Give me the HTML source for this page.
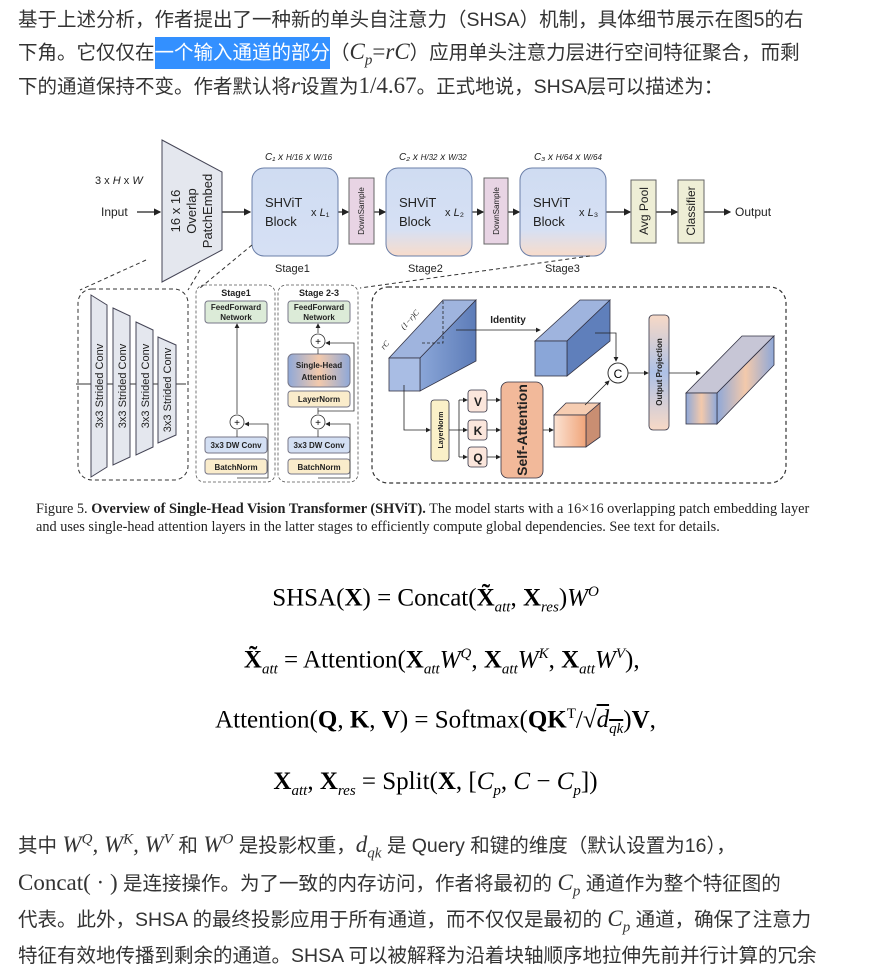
<!DOCTYPE html>
<html><head><meta charset="utf-8"><style>
body{margin:0;width:871px;height:959px;overflow:hidden;background:#fff;font-family:"Liberation Sans","Noto Sans CJK SC",sans-serif;color:#333;}
.p{position:absolute;left:18px;font-size:19.5px;white-space:nowrap;}
.m{font-family:"Liberation Serif",serif;font-style:italic;font-size:23px;}
.r{font-family:"Liberation Serif",serif;font-size:23px;}
.hl{background:#3390ff;color:#fff;}
.eq{position:absolute;left:0;width:871px;text-align:center;font-family:"Liberation Serif",serif;font-size:25px;color:#000;}
.eq b{font-weight:bold}
sub,sup{font-size:15px;}
</style></head><body>
<div class="p" style="top:3px">基于上述分析，作者提出了一种新的单头自注意力（SHSA）机制，具体细节展示在图5的右</div>
<div class="p" style="top:36px">下角。它仅仅在<span class="hl" style="padding:5px 0">一个输入通道的部分</span>（<span class="m">C<sub>p</sub></span><span class="r">=</span><span class="m">rC</span>）应用单头注意力层进行空间特征聚合，而剩</div>
<div class="p" style="top:70px">下的通道保持不变。作者默认将<span class="m">r</span>设置为<span class="r">1/4.67</span>。正式地说，SHSA层可以描述为：</div>

<svg style="position:absolute;left:0;top:0" width="871" height="540" font-family="Liberation Sans,sans-serif">
<defs>
<linearGradient id="bl" x1="0" y1="0" x2="0" y2="1"><stop offset="0" stop-color="#cfdcf2"/><stop offset="0.7" stop-color="#d6e0f4"/><stop offset="1" stop-color="#f8dccb"/></linearGradient>
<linearGradient id="b1" x1="0" y1="0" x2="0" y2="1"><stop offset="0" stop-color="#cfdcf2"/><stop offset="1" stop-color="#d6e0f4"/></linearGradient>
<linearGradient id="cb" x1="0" y1="0" x2="1" y2="0"><stop offset="0" stop-color="#8aa6d8"/><stop offset="1" stop-color="#5d7cb8"/></linearGradient>
<linearGradient id="co" x1="0" y1="0" x2="1" y2="0"><stop offset="0" stop-color="#fbe3d3"/><stop offset="1" stop-color="#f0a479"/></linearGradient>
<linearGradient id="mx" x1="0" y1="0" x2="1" y2="0"><stop offset="0" stop-color="#8fa8d8"/><stop offset="0.5" stop-color="#f3c9ab"/><stop offset="1" stop-color="#8fa8d8"/></linearGradient>
<linearGradient id="op" x1="0" y1="0" x2="0" y2="1"><stop offset="0" stop-color="#f7d9c6"/><stop offset="0.5" stop-color="#aec1e6"/><stop offset="1" stop-color="#f7d9c6"/></linearGradient>
<marker id="a" markerWidth="6" markerHeight="6" refX="5" refY="3" orient="auto"><path d="M0,0L6,3L0,6z" fill="#222"/></marker>
</defs>
<g font-size="11" fill="#222">
<text x="95" y="184" font-size="11">3 x <tspan font-style="italic">H</tspan> x <tspan font-style="italic">W</tspan></text>
<text x="101" y="216" font-size="12">Input</text>
<text x="735" y="216" font-size="12">Output</text>
</g>
<g stroke="#222" stroke-width="1.2" fill="none" marker-end="url(#a)">
<line x1="137" y1="212" x2="160" y2="212"/><line x1="222" y1="212" x2="250" y2="212"/>
<line x1="338" y1="212" x2="348" y2="212"/><line x1="374" y1="212" x2="385" y2="212"/>
<line x1="472" y1="212" x2="483" y2="212"/><line x1="508" y1="212" x2="519" y2="212"/>
<line x1="606" y1="212" x2="630" y2="212"/><line x1="656" y1="212" x2="677" y2="212"/><line x1="704" y1="212" x2="730" y2="212"/>
</g>
<polygon points="162,140 222,172 222,250 162,282" fill="#e4e7ee" stroke="#445" stroke-width="1"/>
<g font-size="13" fill="#222" text-anchor="middle">
<text transform="translate(180,211) rotate(-90)">16 x 16</text>
<text transform="translate(196,211) rotate(-90)">Overlap</text>
<text transform="translate(212,211) rotate(-90)">PatchEmbed</text>
</g>
<rect x="252" y="168" width="86" height="88" rx="12" fill="url(#b1)" stroke="#6b7fa8"/>
<rect x="386" y="168" width="86" height="88" rx="12" fill="url(#bl)" stroke="#6b7fa8"/>
<rect x="520" y="168" width="86" height="88" rx="12" fill="url(#bl)" stroke="#6b7fa8"/>
<g font-size="13" fill="#222">
<text x="265" y="207">SHViT</text><text x="265" y="226">Block</text><text x="311" y="216" font-size="11">x <tspan font-style="italic">L</tspan>₁</text>
<text x="399" y="207">SHViT</text><text x="399" y="226">Block</text><text x="445" y="216" font-size="11">x <tspan font-style="italic">L</tspan>₂</text>
<text x="533" y="207">SHViT</text><text x="533" y="226">Block</text><text x="579" y="216" font-size="11">x <tspan font-style="italic">L</tspan>₃</text>
<text x="275" y="272" font-size="11">Stage1</text><text x="408" y="272" font-size="11">Stage2</text><text x="545" y="272" font-size="11">Stage3</text>
<text x="265" y="160" font-size="10" font-style="italic">C₁ x <tspan font-size="8">H/16</tspan> x <tspan font-size="8">W/16</tspan></text>
<text x="399" y="160" font-size="10" font-style="italic">C₂ x <tspan font-size="8">H/32</tspan> x <tspan font-size="8">W/32</tspan></text>
<text x="534" y="160" font-size="10" font-style="italic">C₃ x <tspan font-size="8">H/64</tspan> x <tspan font-size="8">W/64</tspan></text>
</g>
<rect x="349" y="178" width="25" height="66" fill="#e8d4e4" stroke="#666"/>
<rect x="484" y="178" width="24" height="66" fill="#e8d4e4" stroke="#666"/>
<rect x="631" y="180" width="25" height="63" fill="#eeeed6" stroke="#666"/>
<rect x="678" y="180" width="26" height="63" fill="#eeeed6" stroke="#666"/>
<g font-size="8" fill="#222" text-anchor="middle">
<text transform="translate(364,211) rotate(-90)">DownSample</text>
<text transform="translate(499,211) rotate(-90)">DownSample</text>
<text transform="translate(648,211) rotate(-90)" font-size="12">Avg Pool</text>
<text transform="translate(695,211) rotate(-90)" font-size="12">Classifier</text>
</g>
<g stroke="#333" stroke-dasharray="4,3" fill="none" stroke-width="1">
<line x1="146" y1="260" x2="80" y2="290"/><line x1="200" y1="270" x2="188" y2="290"/>
<line x1="252" y1="245" x2="200" y2="288"/>
<line x1="590" y1="256" x2="360" y2="288"/>
<rect x="78" y="289" width="110" height="191" rx="14"/>
<rect x="372" y="287" width="414" height="196" rx="16" stroke-width="1.2"/>
</g>
<g stroke="#555" stroke-dasharray="3,2" fill="none" stroke-width="0.8">
<rect x="196" y="285" width="79" height="197" rx="8"/>
<rect x="278" y="285" width="80" height="197" rx="8"/>
</g>
<line x1="76" y1="384" x2="186" y2="384" stroke="#333"/>
<g fill="#e4e7ee" stroke="#445">
<polygon points="91,295 107,305 107,467 91,477"/><polygon points="113,308 130,316 130,457 113,465"/>
<polygon points="136,322 153,330 153,447 136,455"/><polygon points="158,337 176,345 176,435 158,443"/>
</g>
<g font-size="11" fill="#222" text-anchor="middle">
<text transform="translate(103,386) rotate(-90)">3x3 Strided Conv</text><text transform="translate(126,386) rotate(-90)">3x3 Strided Conv</text>
<text transform="translate(149,386) rotate(-90)">3x3 Strided Conv</text><text transform="translate(171,390) rotate(-90)">3x3 Strided Conv</text>
</g>
<g font-size="8" font-weight="bold" fill="#222" text-anchor="middle">
<text x="236" y="296" font-size="9">Stage1</text><text x="319" y="296" font-size="9">Stage 2-3</text>
<rect x="205" y="301" width="62" height="22" rx="3" fill="#dcebd8" stroke="#778"/>
<text x="236" y="310">FeedForward</text><text x="236" y="320">Network</text>
<rect x="205" y="437" width="62" height="16" rx="3" fill="#d3dff3" stroke="#778"/><text x="236" y="448">3x3 DW Conv</text>
<rect x="205" y="459" width="62" height="15" rx="3" fill="#faeccb" stroke="#778"/><text x="236" y="470">BatchNorm</text>
<rect x="288" y="301" width="62" height="22" rx="3" fill="#dcebd8" stroke="#778"/>
<text x="319" y="310">FeedForward</text><text x="319" y="320">Network</text>
<rect x="288" y="354" width="62" height="33" rx="5" fill="url(#mx)" stroke="#778"/><text x="319" y="368">Single-Head</text><text x="319" y="380">Attention</text>
<rect x="288" y="391" width="62" height="16" rx="3" fill="#faeccb" stroke="#778"/><text x="319" y="402">LayerNorm</text>
<rect x="288" y="437" width="62" height="16" rx="3" fill="#d3dff3" stroke="#778"/><text x="319" y="448">3x3 DW Conv</text>
<rect x="288" y="459" width="62" height="15" rx="3" fill="#faeccb" stroke="#778"/><text x="319" y="470">BatchNorm</text>
</g>
<g stroke="#333" fill="none" stroke-width="0.8">
<line x1="237" y1="414" x2="237" y2="324" marker-end="url(#a)"/><line x1="237" y1="437" x2="237" y2="430"/>
<polyline points="237,478 268,478 268,424 245,424" marker-end="url(#a)"/>
<line x1="318" y1="333" x2="318" y2="324" marker-end="url(#a)"/><line x1="318" y1="354" x2="318" y2="349"/>
<line x1="318" y1="414" x2="318" y2="408"/><line x1="318" y1="437" x2="318" y2="430"/>
<polyline points="318,478 350,478 350,424 326,424" marker-end="url(#a)"/>
<polyline points="318,411 354,411 354,343 326,343" marker-end="url(#a)"/>
</g>
<g fill="#fff" stroke="#333" stroke-width="0.8"><circle cx="237" cy="422" r="7"/><circle cx="318" cy="341" r="7"/><circle cx="318" cy="422" r="7"/></g>
<g font-size="10" text-anchor="middle"><text x="237" y="426">+</text><text x="318" y="345">+</text><text x="318" y="426">+</text></g>
<g stroke="#334" stroke-width="0.8">
<polygon points="389,358 443,300 476,300 420,358" fill="#9fb4de"/><polygon points="420,358 476,300 476,361 420,391" fill="url(#cb)"/><rect x="389" y="358" width="31" height="33" fill="#a9bde4"/>
<polygon points="535,341 580,300 610,300 567,341" fill="#9fb4de"/><polygon points="567,341 610,300 610,341 567,376" fill="#5f7fbb"/><rect x="535" y="341" width="32" height="35" fill="#8aa6d8"/>
<polygon points="554,415 566,403 600,403 586,415" fill="#f6cdb2"/><polygon points="586,415 600,403 600,437 586,447" fill="#c98e72"/><rect x="554" y="415" width="32" height="32" fill="url(#co)"/>
<polygon points="686,393 742,336 774,336 717,393" fill="#c7c6d6"/><polygon points="717,393 774,336 774,365 717,424" fill="url(#mx)"/><rect x="686" y="393" width="31" height="31" fill="url(#mx)"/>
<rect x="649" y="315" width="20" height="115" rx="4" fill="url(#op)"/>
<rect x="431" y="400" width="18" height="61" rx="3" fill="#faf0c8"/>
<rect x="468" y="390" width="19" height="22" rx="3" fill="#fbe6dc"/><rect x="468" y="420" width="19" height="20" rx="3" fill="#fbe6dc"/><rect x="468" y="447" width="19" height="20" rx="3" fill="#fbe6dc"/>
<rect x="501" y="382" width="42" height="96" rx="7" fill="#f2b99a"/>
</g>
<g stroke="#222" fill="none" stroke-width="0.8">
<polyline points="422,343 443,343 443,300" stroke-dasharray="3,2"/>
<line x1="456" y1="330" x2="540" y2="330" marker-end="url(#a)"/>
<polyline points="595,333 616,333 616,361" marker-end="url(#a)"/>
<line x1="628" y1="373" x2="648" y2="373" marker-end="url(#a)"/>
<line x1="669" y1="373" x2="700" y2="373" marker-end="url(#a)"/>
<polyline points="404,385 404,430 430,430" marker-end="url(#a)"/>
<polyline points="449,430 459,430"/><polyline points="459,400 459,457"/>
<line x1="459" y1="400" x2="467" y2="400" marker-end="url(#a)"/><line x1="459" y1="430" x2="467" y2="430" marker-end="url(#a)"/><line x1="459" y1="457" x2="467" y2="457" marker-end="url(#a)"/>
<line x1="487" y1="400" x2="500" y2="400" marker-end="url(#a)"/><line x1="487" y1="430" x2="500" y2="430" marker-end="url(#a)"/><line x1="487" y1="457" x2="500" y2="457" marker-end="url(#a)"/>
<line x1="543" y1="430" x2="553" y2="430" marker-end="url(#a)"/>
<line x1="585" y1="405" x2="609" y2="381" marker-end="url(#a)"/>
</g>
<circle cx="618" cy="373" r="10" fill="#fff" stroke="#333"/>
<text x="618" y="378" font-size="12" text-anchor="middle">C</text>
<g font-size="10" font-weight="bold" fill="#222" text-anchor="middle">
<text x="508" y="323" font-size="10">Identity</text>
<text transform="translate(443,430) rotate(-90)" font-size="7">LayerNorm</text>
<text x="478" y="406" font-size="12">V</text><text x="478" y="435" font-size="12">K</text><text x="478" y="462" font-size="12">Q</text>
<text transform="translate(527,430) rotate(-90)" font-size="14">Self-Attention</text>
<text transform="translate(662,372) rotate(-90)" font-size="8">Output Projection</text>
</g>
<g font-size="8" font-style="italic" fill="#222" font-family="Liberation Serif,serif"><text transform="translate(384,350) rotate(-48)">rC</text><text transform="translate(404,330) rotate(-48)">(1−r)C</text></g>
<g font-family="Liberation Serif,serif" font-size="14.3" fill="#222">
<text x="36" y="513">Figure 5. <tspan font-weight="bold">Overview of Single-Head Vision Transformer (SHViT).</tspan> The model starts with a 16×16 overlapping patch embedding layer</text>
<text x="36" y="531">and uses single-head attention layers in the latter stages to efficiently compute global dependencies. See text for details.</text>
</g>
</svg>

<div class="eq" style="top:584px">SHSA(<b>X</b>) = Concat(<b>X̃</b><sub><i>att</i></sub>, <b>X</b><sub><i>res</i></sub>)<i>W</i><sup><i>O</i></sup></div>
<div class="eq" style="top:646px">&nbsp;&nbsp;<b>X̃</b><sub><i>att</i></sub> = Attention(<b>X</b><sub><i>att</i></sub><i>W</i><sup><i>Q</i></sup>, <b>X</b><sub><i>att</i></sub><i>W</i><sup><i>K</i></sup>, <b>X</b><sub><i>att</i></sub><i>W</i><sup><i>V</i></sup>),</div>
<div class="eq" style="top:706px">Attention(<b>Q</b>, <b>K</b>, <b>V</b>) = Softmax(<b>QK</b><sup>T</sup>/√<span style="text-decoration:overline"><i>d</i><sub><i>qk</i></sub></span>)<b>V</b>,</div>
<div class="eq" style="top:768px"><b>X</b><sub><i>att</i></sub>, <b>X</b><sub><i>res</i></sub> = Split(<b>X</b>, [<i>C</i><sub><i>p</i></sub>, <i>C</i> − <i>C</i><sub><i>p</i></sub>])</div>

<div class="p" style="top:829px">其中 <span class="m">W<sup>Q</sup>, W<sup>K</sup>, W<sup>V</sup></span> 和 <span class="m">W<sup>O</sup></span> 是投影权重，<span class="m">d<sub>qk</sub></span> 是 Query 和键的维度（默认设置为16），</div>
<div class="p" style="top:867px"><span class="r">Concat( · )</span> 是连接操作。为了一致的内存访问，作者将最初的 <span class="m">C<sub>p</sub></span> 通道作为整个特征图的</div>
<div class="p" style="top:903px">代表。此外，SHSA 的最终投影应用于所有通道，而不仅仅是最初的 <span class="m">C<sub>p</sub></span> 通道，确保了注意力</div>
<div class="p" style="top:939px">特征有效地传播到剩余的通道。SHSA 可以被解释为沿着块轴顺序地拉伸先前并行计算的冗余</div>
</body></html>
